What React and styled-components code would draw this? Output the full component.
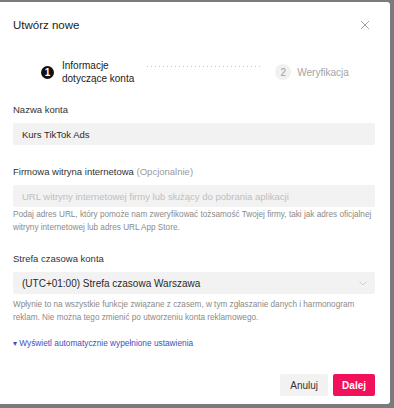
import React from 'react';
import styled, { createGlobalStyle } from 'styled-components';

const Global = createGlobalStyle`
  html, body {
    margin: 0;
    padding: 0;
    background: #7b7b7b;
    font-family: "Liberation Sans", Arial, sans-serif;
  }
`;

const Modal = styled.div`
  box-sizing: border-box;
  margin-top: 2px;
  width: 390px;
  height: 402px;
  background: #fff;
  border-radius: 0 3px 3px 0;
  padding: 0 15px 0 13px;
  display: flex;
  flex-direction: column;
  color: #161823;
`;

const Header = styled.div`
  display: flex;
  align-items: center;
  justify-content: space-between;
  height: 46px;
`;

const Title = styled.h2`
  margin: 0;
  font-size: 11.5px;
  font-weight: 400;
  color: #222;
`;

const Close = styled.button`
  border: 0;
  background: none;
  padding: 0;
  width: 10px;
  height: 10px;
  margin-right: 5px;
  display: flex;
  color: #9a9a9a;
`;

const Steps = styled.div`
  display: flex;
  align-items: center;
  padding: 10px 0 0 28px;
  height: 28px;
`;

const Step = styled.div`
  display: flex;
  align-items: center;
  gap: ${p => (p.active ? 8 : 6)}px;
  font-size: 10px;
  line-height: 13px;
  color: ${p => (p.active ? '#222' : '#a3a3a3')};
`;

const Dot = styled.span`
  box-sizing: border-box;
  width: ${p => (p.active ? 13 : 16)}px;
  height: ${p => (p.active ? 13 : 16)}px;
  min-width: ${p => (p.active ? 13 : 16)}px;
  border-radius: 50%;
  background: ${p => (p.active ? '#111' : '#f1f1f1')};
  color: ${p => (p.active ? '#fff' : '#a0a0a0')};
  font-size: ${p => (p.active ? 10 : 10)}px;
  font-weight: ${p => (p.active ? 700 : 400)};
  display: flex;
  align-items: center;
  justify-content: center;
`;

const Dashes = styled.div`
  width: 116px;
  height: 1px;
  margin: -11px 12px 0 13px;
  background-image: linear-gradient(to right, #c8c8c8 1px, transparent 1px);
  background-size: 4px 1px;
`;

const Field = styled.div`
  margin-top: ${p => p.top}px;
`;

const Label = styled.div`
  font-size: 9.5px;
  line-height: 12px;
  color: #333;
  margin-bottom: 7px;
`;

const Optional = styled.span`
  color: #9a9a9a;
`;

const Box = styled.div`
  height: 22px;
  background: #f2f2f2;
  border-radius: 2px;
  display: flex;
  align-items: center;
  justify-content: space-between;
  padding: 0 8px 0 9px;
  font-size: ${p => p.size || 9.5}px;
  color: ${p => (p.placeholder ? '#c0c0c0' : '#2a2a2a')};
`;

const Help = styled.p`
  margin: ${p => p.top}px 0 0;
  font-size: 8.2px;
  line-height: 12.5px;
  color: #8a8a8a;
`;

const Link = styled.div`
  margin-top: 13px;
  font-size: 8.3px;
  line-height: 12px;
  color: #4150c0;
`;

const Footer = styled.div`
  margin-top: auto;
  margin-bottom: 8px;
  display: flex;
  justify-content: flex-end;
  gap: 5px;
`;

const Button = styled.button`
  height: 22px;
  border: 0;
  border-radius: 2px;
  padding: 0 ${p => (p.primary ? 9 : 10)}px;
  font-family: inherit;
  font-size: 10px;
  font-weight: ${p => (p.primary ? 700 : 400)};
  background: ${p => (p.primary ? '#f3105a' : '#f2f2f2')};
  color: ${p => (p.primary ? '#fff' : '#333')};
`;

export default function App() {
  return (
    <>
      <Global />
      <Modal>
        <Header>
          <Title>Utwórz nowe</Title>
          <Close>
            <svg width="10" height="10" viewBox="0 0 10 10">
              <path d="M1 1L9 9M9 1L1 9" stroke="currentColor" strokeWidth="0.9" />
            </svg>
          </Close>
        </Header>
        <Steps>
          <Step active>
            <Dot active>1</Dot>
            <span>Informacje<br />dotyczące konta</span>
          </Step>
          <Dashes />
          <Step>
            <Dot>2</Dot>
            <span>Weryfikacja</span>
          </Step>
        </Steps>
        <Field top={18}>
          <Label>Nazwa konta</Label>
          <Box>Kurs TikTok Ads</Box>
        </Field>
        <Field top={21}>
          <Label>Firmowa witryna internetowa <Optional>(Opcjonalnie)</Optional></Label>
          <Box placeholder>URL witryny internetowej firmy lub służący do pobrania aplikacji</Box>
          <Help top={2}>
            Podaj adres URL, który pomoże nam zweryfikować tożsamość Twojej firmy, taki jak adres oficjalnej
            witryny internetowej lub adres URL App Store.
          </Help>
        </Field>
        <Field top={19}>
          <Label>Strefa czasowa konta</Label>
          <Box size={10}>
            <span>(UTC+01:00) Strefa czasowa Warszawa</span>
            <svg width="8" height="5" viewBox="0 0 8 5">
              <path d="M0.5 0.5L4 4L7.5 0.5" fill="none" stroke="#cccccc" strokeWidth="0.9" />
            </svg>
          </Box>
          <Help top={5}>
            Wpłynie to na wszystkie funkcje związane z czasem, w tym zgłaszanie danych i harmonogram
            reklam. Nie można tego zmienić po utworzeniu konta reklamowego.
          </Help>
        </Field>
        <Link>▾ Wyświetl automatycznie wypełnione ustawienia</Link>
        <Footer>
          <Button>Anuluj</Button>
          <Button primary>Dalej</Button>
        </Footer>
      </Modal>
    </>
  );
}
